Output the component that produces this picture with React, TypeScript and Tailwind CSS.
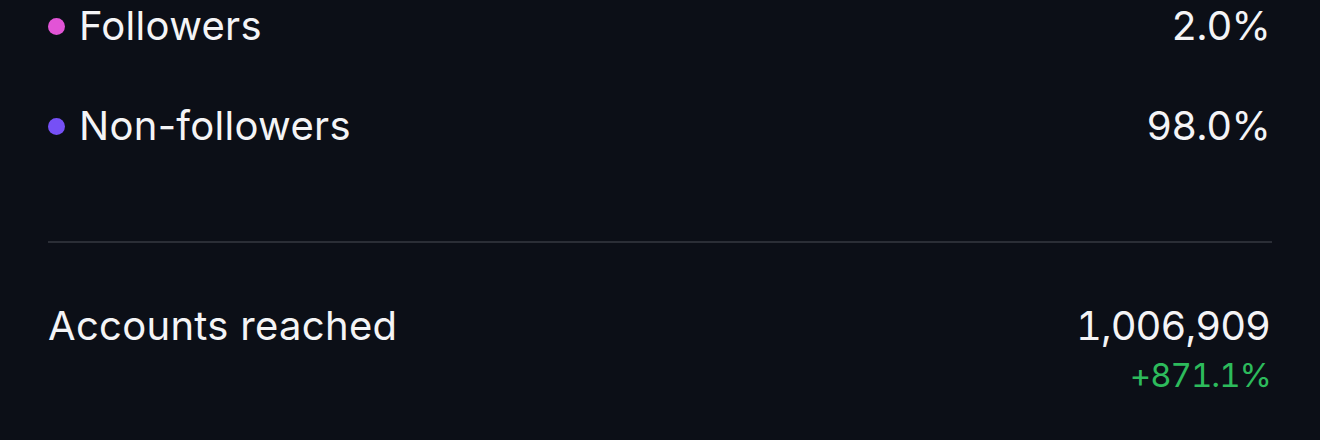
import React from "react";

export default function App() {
  const font = { fontFamily: "Inter, 'Noto Sans', sans-serif" };
  return (
    <div
      className="w-[1320px] h-[440px] bg-[#0c0f17] text-[#f4f4f6] overflow-hidden"
      style={font}
    >
      <div className="pl-[48px] pr-[50px] pt-[2px]">
        <div className="flex flex-col gap-[52px]">
          <div className="flex items-center justify-between h-[48px]">
            <div className="flex items-center">
              <span className="w-[17px] h-[17px] rounded-full bg-[#e254d6] mr-[14px]" />
              <span className="text-[40px] leading-[48px] tracking-[0.3px]">Followers</span>
            </div>
            <span className="text-[40px] leading-[48px] tabular-nums tracking-[-0.8px]">2.0%</span>
          </div>
          <div className="flex items-center justify-between h-[48px]">
            <div className="flex items-center">
              <span className="w-[17px] h-[17px] rounded-full bg-[#7650f6] mr-[14px]" />
              <span className="text-[40px] leading-[48px] tracking-[0.3px]">Non-followers</span>
            </div>
            <span className="text-[40px] leading-[48px] tabular-nums tracking-[-0.8px]">98.0%</span>
          </div>
        </div>
        <div className="mt-[91px] h-[2px] bg-[#2b2e36] mr-[-2px]" />
        <div className="mt-[59px] flex justify-between">
          <span className="text-[40px] leading-[48px] tracking-[0.3px]">Accounts reached</span>
          <div className="flex flex-col items-end">
            <span className="text-[40px] leading-[48px] tabular-nums tracking-[-1px]">1,006,909</span>
            <span className="text-[33px] leading-[40px] mt-[5px] text-[#2dbb5c] tabular-nums tracking-[-1px] mr-[-1px]">+871.1%</span>
          </div>
        </div>
      </div>
    </div>
  );
}
